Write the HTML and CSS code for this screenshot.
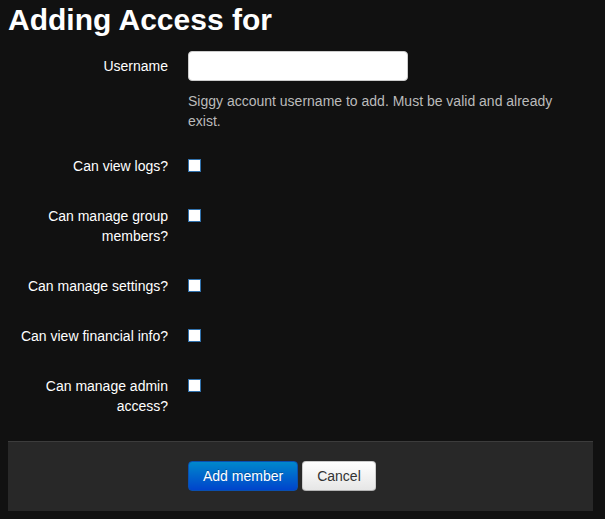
FILE: index.html
```html
<!DOCTYPE html>
<html>
<head>
<meta charset="utf-8">
<title>Adding Access</title>
<link rel="stylesheet" href="styles.css">
</head>
<body>
<div class="page">
  <h1 class="title">Adding Access for</h1>
  <form class="form">
    <div class="group">
      <label class="label" for="username">Username</label>
      <div class="controls">
        <input class="text-input" type="text" id="username">
        <p class="help">Siggy account username to add. Must be valid and already exist.</p>
      </div>
    </div>
    <div class="group">
      <label class="label" for="logs">Can view logs?</label>
      <div class="controls"><input class="check" type="checkbox" id="logs"></div>
    </div>
    <div class="group">
      <label class="label" for="members">Can manage group members?</label>
      <div class="controls"><input class="check" type="checkbox" id="members"></div>
    </div>
    <div class="group">
      <label class="label" for="settings">Can manage settings?</label>
      <div class="controls"><input class="check" type="checkbox" id="settings"></div>
    </div>
    <div class="group">
      <label class="label" for="financial">Can view financial info?</label>
      <div class="controls"><input class="check" type="checkbox" id="financial"></div>
    </div>
    <div class="group">
      <label class="label" for="admin">Can manage admin access?</label>
      <div class="controls"><input class="check" type="checkbox" id="admin"></div>
    </div>
    <div class="actions">
      <button type="button" class="btn btn-primary">Add member</button>
      <button type="button" class="btn btn-default">Cancel</button>
    </div>
  </form>
</div>
</body>
</html>
```

FILE: styles.css
```css
html, body {
  margin: 0;
  padding: 0;
  background: #111111;
}

body {
  font-family: "Liberation Sans", Arial, sans-serif;
  font-size: 14px;
  line-height: 20px;
  color: #ffffff;
}

.page {
  margin: 0 12px 0 8px;
  padding-bottom: 8px;
}

.title {
  margin: 0 0 11px;
  font-size: 30px;
  line-height: 40px;
  font-weight: bold;
  color: #ffffff;
}

.form {
  display: flex;
  flex-direction: column;
  gap: 20px;
  margin: 0;
}

.group {
  display: grid;
  grid-template-columns: 160px 1fr;
  column-gap: 20px;
  align-items: start;
}

.label {
  padding: 5px 0;
  text-align: right;
  color: #ffffff;
}

.controls {
  display: flex;
  flex-direction: column;
  align-items: flex-start;
}

.text-input {
  box-sizing: border-box;
  width: 220px;
  height: 30px;
  margin: 0;
  padding: 4px 6px;
  background: #ffffff;
  border: 1px solid #cccccc;
  border-radius: 4px;
  font-family: inherit;
  font-size: 14px;
}

.help {
  margin: 10px 0 0;
  max-width: 395px;
  color: #bbbbbb;
}

.check {
  appearance: none;
  -webkit-appearance: none;
  box-sizing: border-box;
  width: 13px;
  height: 13px;
  margin: 8px 0 0;
  background: #ffffff;
  border: 1px solid #3272ad;
  border-radius: 0;
}

.actions {
  display: flex;
  gap: 4px;
  padding: 19px 20px 20px 180px;
  background: #282828;
  border-top: 1px solid #3c3c3c;
}

.btn {
  box-sizing: border-box;
  height: 30px;
  padding: 4px 14px;
  font-family: "Liberation Sans", Arial, sans-serif;
  font-size: 14px;
  line-height: 20px;
  border-radius: 4px;
  cursor: pointer;
}

.btn-primary {
  color: #ffffff;
  background: linear-gradient(to bottom, #0088cc, #0044cc);
  border: 1px solid #0a4fb0;
  text-shadow: 0 -1px 0 rgba(0, 0, 0, 0.25);
}

.btn-default {
  color: #333333;
  background: linear-gradient(to bottom, #ffffff, #e6e6e6);
  border: 1px solid #cccccc;
  border-bottom-color: #b3b3b3;
}
```
